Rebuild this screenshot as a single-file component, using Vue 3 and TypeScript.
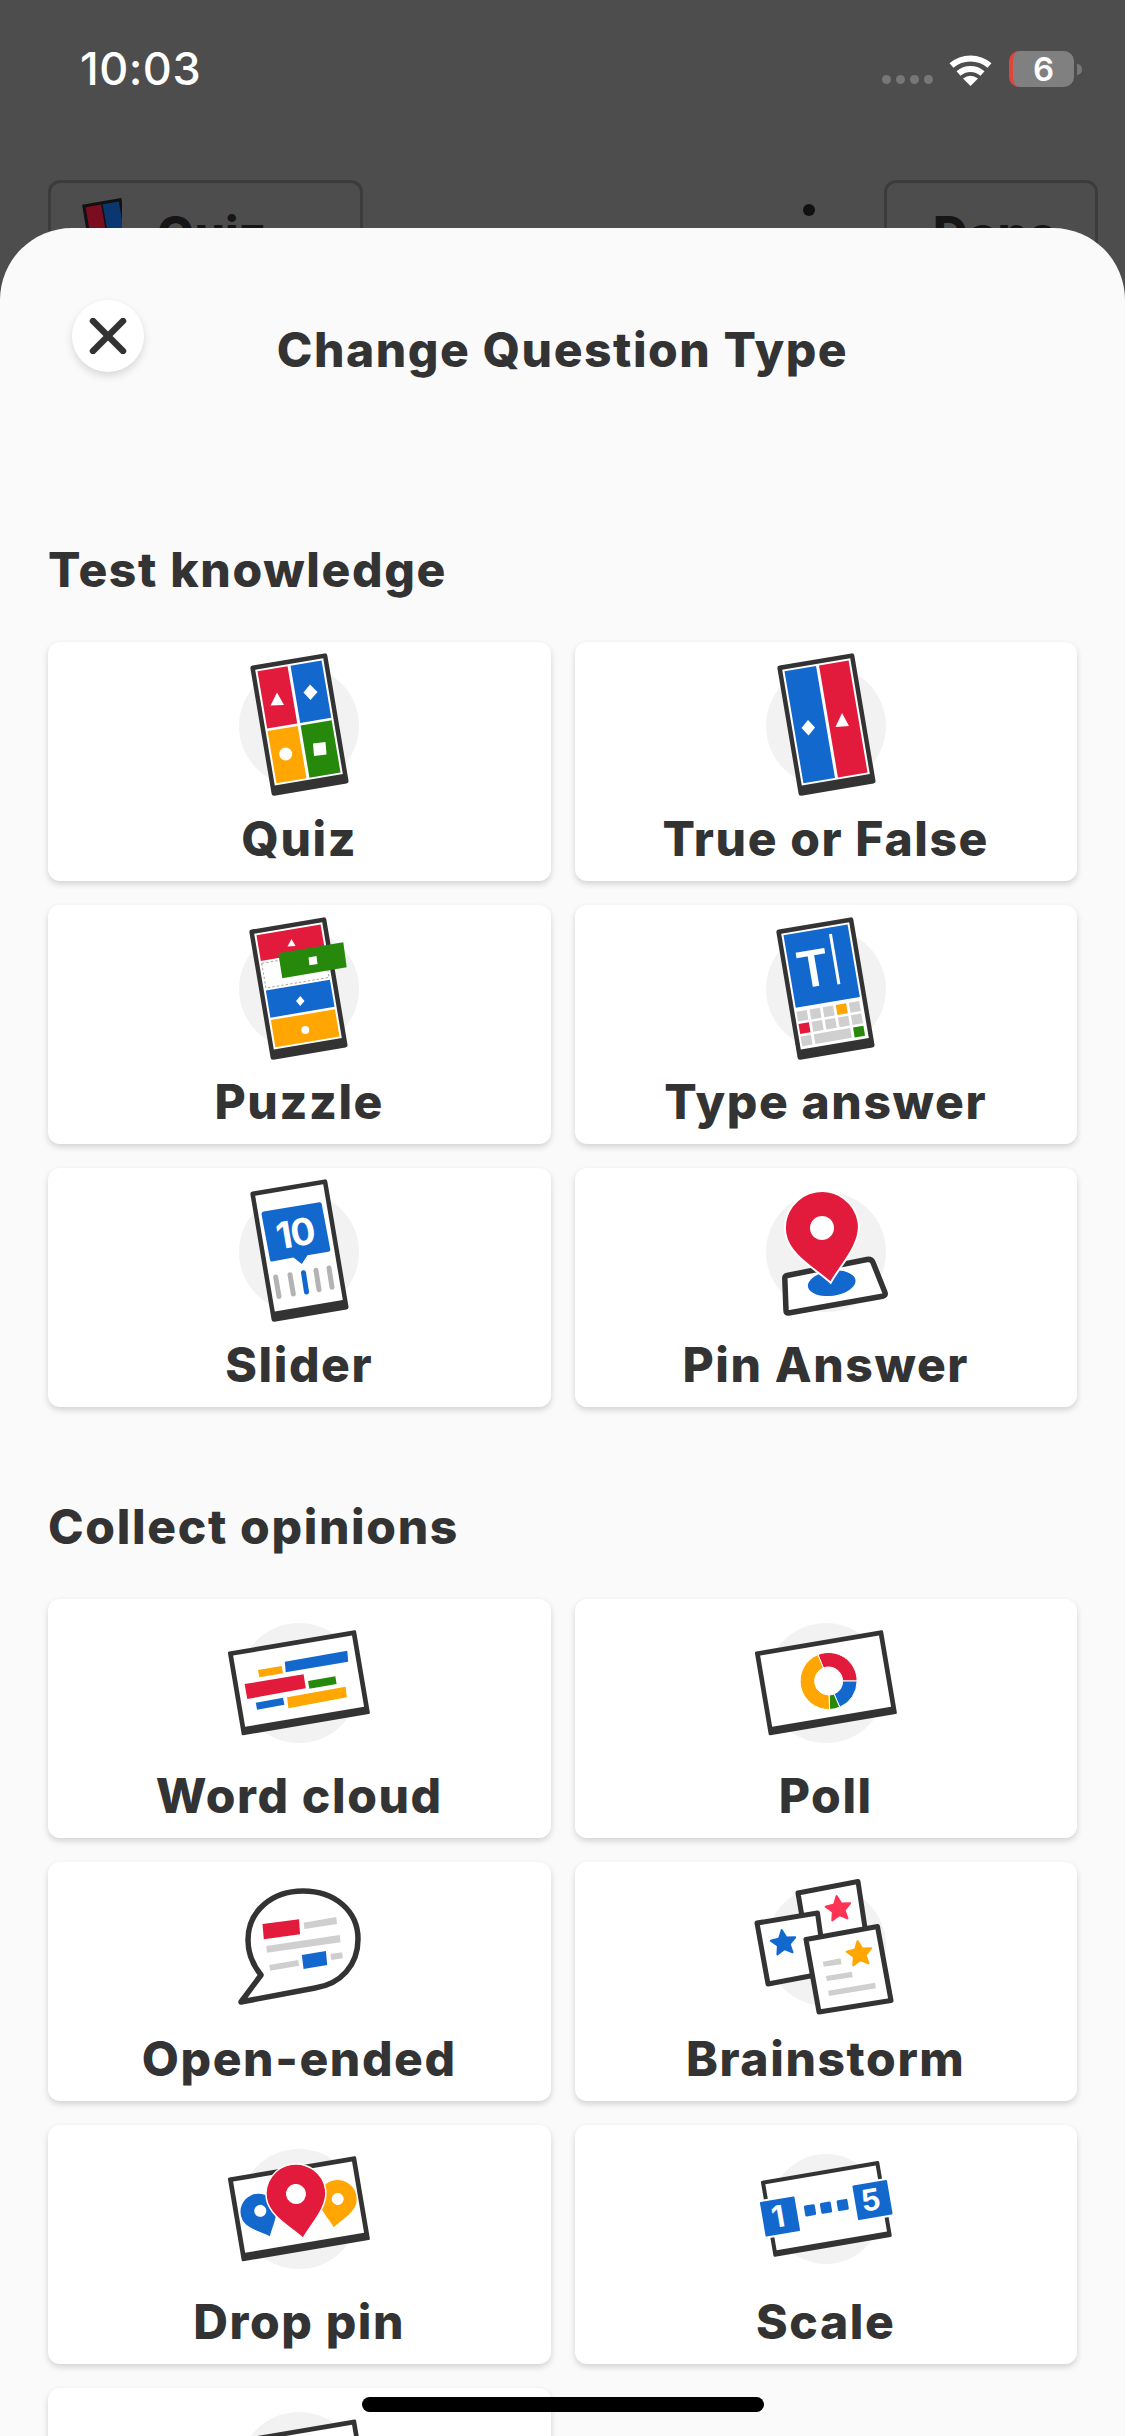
<script setup lang="ts">
type Item = { label: string; icon: string };

const sections: { title: string; items: Item[] }[] = [
  {
    title: "Test knowledge",
    items: [
      { label: "Quiz", icon: "quiz" },
      { label: "True or False", icon: "truefalse" },
      { label: "Puzzle", icon: "puzzle" },
      { label: "Type answer", icon: "type" },
      { label: "Slider", icon: "slider" },
      { label: "Pin Answer", icon: "pin" },
    ],
  },
  {
    title: "Collect opinions",
    items: [
      { label: "Word cloud", icon: "cloud" },
      { label: "Poll", icon: "poll" },
      { label: "Open-ended", icon: "open" },
      { label: "Brainstorm", icon: "brainstorm" },
      { label: "Drop pin", icon: "droppin" },
      { label: "Scale", icon: "scale" },
      { label: "", icon: "blank" },
    ],
  },
];

const red = "#e21b3c";
const blue = "#1368ce";
const yellow = "#ffa602";
const green = "#26890c";
const grey = "#cfcfcf";

// point on a circle, degrees clockwise from north
const polar = (cx: number, cy: number, r: number, deg: number) => {
  const a = (deg * Math.PI) / 180;
  return `${(cx + r * Math.sin(a)).toFixed(2)} ${(cy - r * Math.cos(a)).toFixed(2)}`;
};

const donut = [
  { from: -22, to: 90, color: red },
  { from: 90, to: 157, color: blue },
  { from: 157, to: 178, color: green },
  { from: 178, to: 338, color: yellow },
].map((s) => {
  const large = s.to - s.from > 180 ? 1 : 0;
  const d = [
    `M${polar(82.6, 78, 28.5, s.from)}`,
    `A28.5 28.5 0 ${large} 1 ${polar(82.6, 78, 28.5, s.to)}`,
    `L${polar(82.6, 78, 14, s.to)}`,
    `A14 14 0 ${large} 0 ${polar(82.6, 78, 14, s.from)}Z`,
  ].join(" ");
  return { d, color: s.color };
});

const star = (cx: number, cy: number, r: number) => {
  const pts: string[] = [];
  for (let i = 0; i < 10; i++) {
    pts.push(polar(cx, cy, i % 2 ? r * 0.48 : r, i * 36 - 8).replace(" ", ","));
  }
  return pts.join(" ");
};

// map pin with its tip straight below the centre of the head
const pinPath = (r: number) =>
  `M${-r} 0A${r} ${r} 0 0 1 ${r} 0C${r} ${r * 0.6} ${r * 0.3} ${r * 1.1} 0 ${r * 1.5}C${-r * 0.3} ${r * 1.1} ${-r} ${r * 0.6} ${-r} 0Z`;
</script>

<template>
  <div class="screen">
    <svg class="defs" width="0" height="0" aria-hidden="true">
      <defs>
        <g id="phone">
          <rect width="78" height="132" rx="2.5" fill="#333" />
          <rect x="4.5" y="4.5" width="69" height="117.5" fill="#fff" />
        </g>
        <g id="tablet">
          <rect width="130" height="85" rx="1.5" fill="#333" />
          <rect x="4.7" y="4.7" width="120.6" height="72.3" fill="#fff" />
        </g>
      </defs>
    </svg>

    <div class="status">
      <span class="time">10:03</span>
      <div class="status-right">
        <div class="signal"><i v-for="n in 4" :key="n" /></div>
        <svg class="wifi" width="45" height="33" viewBox="0 0 45 33">
          <path d="M3.5 12.5A29 29 0 0 1 41.5 12.5M10.5 20.5A18 18 0 0 1 34.5 20.5" fill="none" stroke="#fff" stroke-width="6" />
          <path d="M22.5 33L15 25.5Q22.5 20 30 25.5Z" fill="#fff" />
        </svg>
        <div class="battery"><span>6</span></div>
        <i class="nub" />
      </div>
    </div>

    <div class="behind">
      <div class="behind-btn quiz-btn">
        <svg width="40" height="48" viewBox="0 0 78 94">
          <g transform="translate(0 13) rotate(-9.6)">
            <rect width="78" height="132" fill="#111" />
            <rect x="6" y="6" width="31" height="60" fill="#7a0e20" />
            <rect x="40" y="6" width="32" height="60" fill="#0a376f" />
          </g>
        </svg>
        <span>Quiz</span>
      </div>
      <i class="behind-dot" />
      <div class="behind-btn done-btn"><span>Done</span></div>
    </div>

    <div class="sheet">
      <header class="sheet-head">
        <button class="close" aria-label="Close">
          <svg width="38" height="36" viewBox="0 0 38 36">
            <path d="M4 3L34 33M34 3L4 33" fill="none" stroke="#333" stroke-width="6.5" stroke-linecap="round" />
          </svg>
        </button>
        <h1 class="title">Change Question Type</h1>
      </header>

      <section v-for="section in sections" :key="section.title" class="section">
        <h2 class="section-title">{{ section.title }}</h2>
        <div class="grid">
          <div v-for="item in section.items" :key="item.icon" class="card">
            <svg class="icon" width="160" height="160" viewBox="0 0 160 160">
              <circle v-if="item.icon !== 'open'" cx="80" cy="80" :r="item.icon === 'scale' ? 55 : 60" fill="#f2f2f2" />

              <template v-if="item.icon === 'quiz'">
                <g transform="translate(31 20) rotate(-9.6)">
                  <use href="#phone" />
                  <rect x="6.5" y="6.5" width="30.5" height="58" :fill="red" />
                  <rect x="40" y="6.5" width="31.5" height="58" :fill="blue" />
                  <rect x="6.5" y="67" width="30.5" height="53" :fill="yellow" />
                  <rect x="40" y="67" width="31.5" height="53" :fill="green" />
                </g>
                <polygon points="58,46.5 65,59 51.5,59.5" fill="#fff" />
                <polygon points="91,38.5 98.5,46 91.5,54 84.5,46.5" fill="#fff" />
                <circle cx="66.7" cy="108" r="6.5" fill="#fff" />
                <polygon points="94,97.5 106.5,96 107.5,108.5 95,110" fill="#fff" />
              </template>

              <template v-else-if="item.icon === 'truefalse'">
                <g transform="translate(31 20) rotate(-9.6)">
                  <use href="#phone" />
                  <rect x="6.5" y="6.5" width="32" height="113.5" :fill="blue" />
                  <rect x="41.5" y="6.5" width="30" height="113.5" :fill="red" />
                </g>
                <polygon points="62,74 69,81.5 62.5,89.5 55.5,82" fill="#fff" />
                <polygon points="96,67 103,80 89.5,81" fill="#fff" />
              </template>

              <template v-else-if="item.icon === 'puzzle'">
                <g transform="translate(30 21) rotate(-9.6)">
                  <use href="#phone" />
                  <rect x="6.5" y="6.5" width="65" height="26" :fill="red" />
                  <rect x="7" y="35" width="64" height="25" fill="#fff" stroke="#aaa" stroke-width="1" stroke-dasharray="2.5 2" />
                  <rect x="6.5" y="62.5" width="65" height="27.5" :fill="blue" />
                  <rect x="6.5" y="92.5" width="65" height="27.5" :fill="yellow" />
                </g>
                <polygon points="72.5,30 76.5,37 68.5,37.5" fill="#fff" />
                <polygon points="81.3,87 85.5,92 81.3,97 77,92" fill="#fff" />
                <circle cx="86.3" cy="121" r="4" fill="#fff" />
                <polygon points="59.3,44.3 124.3,33.3 127.7,58.3 63.3,69.3" :fill="green" />
                <polygon points="89.5,48.5 97.5,47 98.5,55 90.5,56.3" fill="#fff" />
              </template>

              <template v-else-if="item.icon === 'type'">
                <g transform="translate(30 21) rotate(-9.6)">
                  <use href="#phone" />
                  <rect x="6.5" y="6.5" width="65" height="73.5" :fill="blue" />
                  <text x="30" y="62" class="glyph" font-size="50" text-anchor="middle" font-weight="600">T</text>
                  <line x1="53" y1="13" x2="53" y2="64" stroke="#fff" stroke-width="3" />
                  <rect v-for="(c, i) in [grey, grey, grey, yellow, grey]" :key="i" :x="6.5 + i * 13.3" y="84" width="10.5" height="10" :fill="c" />
                  <rect v-for="(c, i) in [red, grey, grey, grey, grey]" :key="i" :x="6.5 + i * 13.3" y="96.5" width="10.5" height="10" :fill="c" />
                  <rect x="6.5" y="109" width="10.5" height="10" :fill="grey" />
                  <rect x="19.8" y="109" width="37" height="10" :fill="grey" />
                  <rect x="59.7" y="109" width="10.5" height="10" :fill="green" />
                </g>
              </template>

              <template v-else-if="item.icon === 'slider'">
                <g transform="translate(31 20) rotate(-9.6)">
                  <use href="#phone" />
                </g>
                <path d="M44.5 39.5L100.5 30.3Q102.4 30 102.7 32L111.3 77.5Q111.6 79.5 109.5 79.8L88.5 83.3L82.8 92L74.5 85.5L53 89.5Q51.3 89.7 51 88L42.5 42Q42.4 40 44.5 39.5Z" :fill="blue" />
                <g transform="translate(76 61) rotate(-9.6)">
                  <text x="0" y="13.5" class="glyph" font-size="37" text-anchor="middle" font-weight="700" letter-spacing="-1.5">10</text>
                </g>
                <g stroke-width="5" stroke-linecap="round" fill="none">
                  <path d="M56.7 105L60 124.5M71 102.7L74.3 122M97 98.3L100 117.7M110 96L113 115.3" stroke="#b3b3b3" />
                  <path d="M84.5 100.7L87.5 120" :stroke="blue" />
                </g>
              </template>

              <template v-else-if="item.icon === 'pin'">
                <path d="M41 103.5L121 87.5Q125.5 86.8 127 90.5L139 120.5Q140 123.5 136.5 124.2L42.5 141Q40 141.3 40 138.5L38.8 106.5Q38.8 104 41 103.5Z" fill="#fff" stroke="#333" stroke-width="5.5" stroke-linejoin="round" />
                <ellipse cx="85.7" cy="111.3" rx="24" ry="12.5" transform="rotate(-8 85.7 111.3)" :fill="blue" />
                <g transform="translate(76 56) rotate(-9)">
                  <path :d="pinPath(37)" :fill="red" stroke="#fff" stroke-width="2" />
                  <circle r="12" fill="#fff" />
                </g>
              </template>

              <template v-else-if="item.icon === 'cloud'">
                <use href="#tablet" transform="translate(8.7 48.7) rotate(-9.6)" />
                <polygon points="65.8,58.7 128.3,47.7 129.2,58.7 66.7,69.3" :fill="blue" />
                <polygon points="39,67 62.7,63 64,70.3 40.4,74.3" :fill="yellow" />
                <polygon points="25.6,81 84.6,71.3 86.8,85.3 28.3,96" :fill="red" />
                <polygon points="89,78 116.3,73.3 117.6,81 90.4,85.7" :fill="green" />
                <polygon points="68,94.3 126.5,83.7 127.9,94.3 69.4,105.3" :fill="yellow" />
                <polygon points="36.8,99.7 64,94.7 65.4,101.7 38.1,106.7" :fill="blue" />
              </template>

              <template v-else-if="item.icon === 'poll'">
                <use href="#tablet" transform="translate(8.7 48.7) rotate(-9.6)" />
                <path v-for="(s, i) in donut" :key="i" :d="s.d" :fill="s.color" stroke="#fff" stroke-width="1" />
              </template>

              <template v-else-if="item.icon === 'open'">
                <path d="M22 136L42 109C33 98 29 86 29 74C29 45 53 25 84 25C116 25 139 45 139 73C139 99 122 118 96 122Z" fill="#fff" stroke="#333" stroke-width="5.5" stroke-linejoin="round" />
                <polygon points="43.5,58 80.1,53.3 81,68.3 44.8,73.3" :fill="red" />
                <polygon points="84.6,56.7 117.2,51 118,58 85.5,63" :fill="grey" />
                <polygon points="47.1,80 120.7,69 121.6,76.3 48,86.7" :fill="grey" />
                <polygon points="50.2,99 79.2,94 80.1,99.7 51.1,104.7" :fill="grey" />
                <polygon points="82.8,89 106.9,85 108.2,99 84.6,103" :fill="blue" />
                <polygon points="111.4,88 123,86.3 123.9,92.3 112.3,94" :fill="grey" />
              </template>

              <template v-else-if="item.icon === 'brainstorm'">
                <g fill="#fff" stroke="#333" stroke-width="5" stroke-linejoin="round">
                  <polygon points="52,27 112,15.5 121,75 62,86" />
                  <polygon points="11,57 71.5,47 80,107 22,118" />
                  <polygon points="60,73.5 131.5,60.5 145,134.5 73,146" />
                </g>
                <polygon :points="star(92.4, 43, 13)" fill="#ff3355" stroke="#ff3355" stroke-width="2" stroke-linejoin="round" />
                <polygon :points="star(37.5, 77, 13)" :fill="blue" :stroke="blue" stroke-width="2" stroke-linejoin="round" />
                <polygon :points="star(113.4, 88, 13)" :fill="yellow" :stroke="yellow" stroke-width="2" stroke-linejoin="round" />
                <polygon points="76.8,95.7 94.6,92.3 95.5,98.3 77.7,100.7" :fill="grey" />
                <polygon points="79.9,110 105.8,105.7 106.7,111.3 80.8,115" :fill="grey" />
                <polygon points="82.1,124.7 129,116.7 129.9,122.3 83,130" :fill="grey" />
              </template>

              <template v-else-if="item.icon === 'droppin'">
                <use href="#tablet" transform="translate(8.7 48.7) rotate(-9.6)" />
                <g transform="translate(39.5 82.7) rotate(-25)">
                  <path :d="pinPath(18)" :fill="blue" />
                  <circle cx="2" r="6" fill="#fff" />
                </g>
                <g transform="translate(118.7 70) rotate(8)">
                  <path :d="pinPath(19)" :fill="yellow" />
                  <circle r="6" fill="#fff" />
                </g>
                <g transform="translate(77 65) rotate(-9)">
                  <path :d="pinPath(30)" :fill="red" stroke="#fff" stroke-width="1.5" />
                  <circle r="10" fill="#fff" />
                </g>
              </template>

              <template v-else-if="item.icon === 'scale'">
                <g transform="translate(14.7 52) rotate(-9.7)">
                  <rect width="120" height="77" rx="1.5" fill="#333" />
                  <rect x="4" y="4" width="112" height="67" fill="#fff" />
                </g>
                <g :fill="blue" stroke="#fff" stroke-width="2" stroke-linejoin="round">
                  <rect x="-18.5" y="-18.5" width="37" height="37" rx="2" transform="translate(34 87.5) rotate(-9.7)" />
                  <rect x="-18.5" y="-18.5" width="37" height="37" rx="2" transform="translate(126.5 71) rotate(-9.7)" />
                </g>
                <g :fill="blue">
                  <rect x="-5.5" y="-5.5" width="11" height="11" rx="1.5" transform="translate(64 81.3) rotate(-9.7)" />
                  <rect x="-5.5" y="-5.5" width="11" height="11" rx="1.5" transform="translate(80 78.7) rotate(-9.7)" />
                  <rect x="-5.5" y="-5.5" width="11" height="11" rx="1.5" transform="translate(96.7 76) rotate(-9.7)" />
                </g>
                <text transform="translate(34 98) rotate(-9.7)" class="glyph" font-size="30" text-anchor="middle" font-weight="700">1</text>
                <text transform="translate(126.5 81.5) rotate(-9.7)" class="glyph" font-size="30" text-anchor="middle" font-weight="700">5</text>
              </template>

              <template v-else-if="item.icon === 'blank'">
                <use href="#tablet" transform="translate(8.7 49) rotate(-9.6)" />
              </template>
            </svg>
            <span v-if="item.label" class="label">{{ item.label }}</span>
          </div>
        </div>
      </section>
    </div>

    <i class="home-bar" />
  </div>
</template>

<style>
html,
body {
  margin: 0;
  background: #4d4d4d;
}
</style>

<style scoped>
.screen {
  position: relative;
  width: 1125px;
  height: 2436px;
  overflow: hidden;
  background: #4d4d4d;
  font-family: Inter, "Liberation Sans", sans-serif;
  color: #333;
}

.defs {
  position: absolute;
}

.status {
  display: flex;
  align-items: center;
  justify-content: space-between;
  height: 36px;
  padding: 51px 43px 0 80px;
  color: #fff;
}

.time {
  font-size: 45px;
  font-weight: 500;
  line-height: 36px;
  letter-spacing: 0.5px;
}

.status-right {
  display: flex;
  align-items: center;
}

.signal {
  display: flex;
  gap: 5px;
  margin: 20px 15px 0 0;
}

.signal i {
  width: 9px;
  height: 9px;
  border-radius: 50%;
  background: #777;
}

.wifi {
  margin-right: 16px;
}

.battery {
  display: flex;
  align-items: center;
  justify-content: center;
  box-sizing: border-box;
  width: 65px;
  height: 36px;
  border-radius: 10px;
  border-left: 4px solid #e0443a;
  background: #808080;
  font-size: 33px;
  font-weight: 600;
}

.nub {
  width: 5px;
  height: 11px;
  margin-left: 3px;
  border-radius: 0 6px 6px 0;
  background: #777;
}

.behind {
  display: flex;
  align-items: flex-start;
  margin-top: 93px;
  padding: 0 27px 0 48px;
}

.behind-btn {
  display: flex;
  align-items: flex-start;
  box-sizing: border-box;
  height: 120px;
  border: 3px solid #3c3c3c;
  border-radius: 12px;
  font-size: 48px;
  font-weight: 800;
  line-height: 1;
  color: #161616;
}

.quiz-btn {
  width: 315px;
  padding: 15px 0 0 31px;
  gap: 35px;
}

.quiz-btn span {
  margin-top: 12px;
}

.done-btn {
  width: 214px;
  padding: 27px 0 0 46px;
}

.behind-dot {
  width: 12px;
  height: 12px;
  margin: 24px 69px 0 auto;
  border-radius: 50%;
  background: #111;
}

.sheet {
  position: absolute;
  top: 228px;
  left: 0;
  right: 0;
  bottom: 0;
  padding-top: 72px;
  border-radius: 72px 72px 0 0;
  background: #fafafa;
}

.sheet-head {
  display: grid;
  grid-template-columns: 72px 1fr 72px;
  align-items: start;
  margin-bottom: 72px;
  padding: 0 72px;
}

.close {
  display: flex;
  align-items: center;
  justify-content: center;
  width: 72px;
  height: 72px;
  padding: 0;
  border: none;
  border-radius: 50%;
  background: #fff;
  box-shadow: 0 4px 8px rgba(0, 0, 0, 0.14);
}

.title {
  margin: 22px 0 0;
  font-size: 48px;
  font-weight: 800;
  line-height: 56px;
  letter-spacing: 1.55px;
  text-align: center;
}

.section {
  padding-top: 92px;
}

.section-title {
  margin: 0 0 44px 48px;
  font-size: 48px;
  font-weight: 800;
  line-height: 56px;
  letter-spacing: 1.65px;
}

.grid {
  display: grid;
  grid-template-columns: 1fr 1fr;
  grid-auto-rows: 239px;
  gap: 24px;
  padding: 0 48px;
}

.card {
  display: flex;
  flex-direction: column;
  align-items: center;
  border-radius: 12px;
  background: #fff;
  box-shadow: 0 3px 6px rgba(0, 0, 0, 0.16);
}

.icon {
  flex: none;
  margin-top: 4px;
}

.label {
  margin-top: 5px;
  font-size: 48px;
  font-weight: 800;
  line-height: 56px;
  letter-spacing: 1.6px;
}

.glyph {
  fill: #fff;
  font-family: Inter, "Liberation Sans", sans-serif;
}

.home-bar {
  position: absolute;
  left: 362px;
  top: 2397px;
  width: 402px;
  height: 15px;
  border-radius: 8px;
  background: #000;
}
</style>
